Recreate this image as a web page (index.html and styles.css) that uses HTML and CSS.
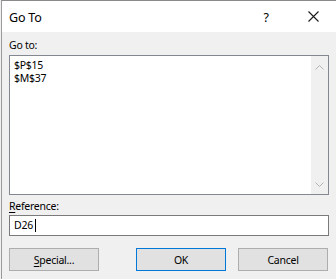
FILE: index.html
```html
<!DOCTYPE html>
<html>
<head>
<meta charset="utf-8">
<link rel="stylesheet" href="styles.css">
</head>
<body>
<div class="dialog">
  <div class="titlebar">
    <span class="title">Go To</span>
    <span class="help">?</span>
    <span class="close">
      <svg width="11" height="11" viewBox="0 0 11 11"><path d="M0.5 0.5 L10.5 10.5 M10.5 0.5 L0.5 10.5" stroke="#1a1a1a" stroke-width="1.1" fill="none"/></svg>
    </span>
  </div>
  <div class="content">
    <div class="label label-go">Go to:</div>
    <div class="listbox">
      <div class="items">
        <div class="item">$P$15</div>
        <div class="item">$M$37</div>
      </div>
      <div class="scrollbar">
        <svg class="arrow" width="9" height="5" viewBox="0 0 9 5"><path d="M0.5 4.5 L4.5 0.5 L8.5 4.5" stroke="#b5b5b5" stroke-width="1" fill="none"/></svg>
        <svg class="arrow" width="9" height="5" viewBox="0 0 9 5"><path d="M0.5 0.5 L4.5 4.5 L8.5 0.5" stroke="#b5b5b5" stroke-width="1" fill="none"/></svg>
      </div>
    </div>
    <div class="label label-ref"><u>R</u>eference:</div>
    <div class="input">D26<span class="caret"></span></div>
    <div class="buttons">
      <button class="btn"><u>S</u>pecial...</button>
      <div class="right">
        <button class="btn btn-default">OK</button>
        <button class="btn">Cancel</button>
      </div>
    </div>
  </div>
</div>
</body>
</html>
```
FILE: styles.css
```css
html, body {
  margin: 0;
  padding: 0;
  background: #f0f0f0;
}
body {
  font-family: "Noto Sans", "Open Sans", sans-serif;
  font-size: 10.5px;
  letter-spacing: -0.25px;
  color: #000;
}
.dialog {
  margin-left: 1px;
  width: 334px;
  height: 278px;
  border-top: 1px solid #8a8a8a;
  border-left: 1px solid #9a9a9a;
  background: #f0f0f0;
  display: flex;
  flex-direction: column;
}
.titlebar {
  height: 31px;
  background: #fff;
  display: flex;
  align-items: center;
  padding-left: 7px;
}
.title {
  font-size: 12.5px;
  letter-spacing: -0.2px;
  flex: 1;
  padding-top: 1px;
}
.help {
  font-size: 12.5px;
  width: 20px;
  text-align: center;
  margin-right: 32px;
  padding-top: 1px;
}
.close {
  width: 11px;
  height: 11px;
  margin-right: 17px;
  display: flex;
}
.content {
  padding: 5px 0 0 7px;
  display: flex;
  flex-direction: column;
}
.label {
  height: 16px;
  line-height: 16px;
}
.label-ref {
  margin-top: 3px;
}
.listbox {
  margin-top: 2px;
  width: 318px;
  height: 138px;
  border: 1px solid #828790;
  background: #fff;
  display: flex;
}
.items {
  flex: 1;
  padding: 3px 0 0 4px;
}
.item {
  height: 13px;
  line-height: 13px;
}
.scrollbar {
  width: 17px;
  background: #f0f0f0;
  display: flex;
  flex-direction: column;
  justify-content: space-between;
  align-items: center;
  padding: 9px 0 7px;
}
.input {
  margin-top: 1px;
  width: 314px;
  height: 19px;
  border: 1px solid #7a7a7a;
  background: #fff;
  padding-left: 4px;
  line-height: 19px;
  display: flex;
  align-items: center;
}
.caret {
  width: 1px;
  height: 13px;
  background: #000;
  margin-left: 2px;
}
.buttons {
  margin-top: 12px;
  width: 319px;
  display: flex;
  justify-content: space-between;
}
.right {
  display: flex;
  gap: 12px;
}
.btn {
  width: 90px;
  height: 23px;
  border: 1px solid #adadad;
  background: #e1e1e1;
  font-family: inherit;
  font-size: 10.5px;
  letter-spacing: -0.25px;
  color: #000;
  padding: 0;
  margin: 0;
}
.btn-default {
  border-color: #0078d7;
}
u {
  text-decoration-thickness: 1px;
  text-underline-offset: 2px;
}
```
